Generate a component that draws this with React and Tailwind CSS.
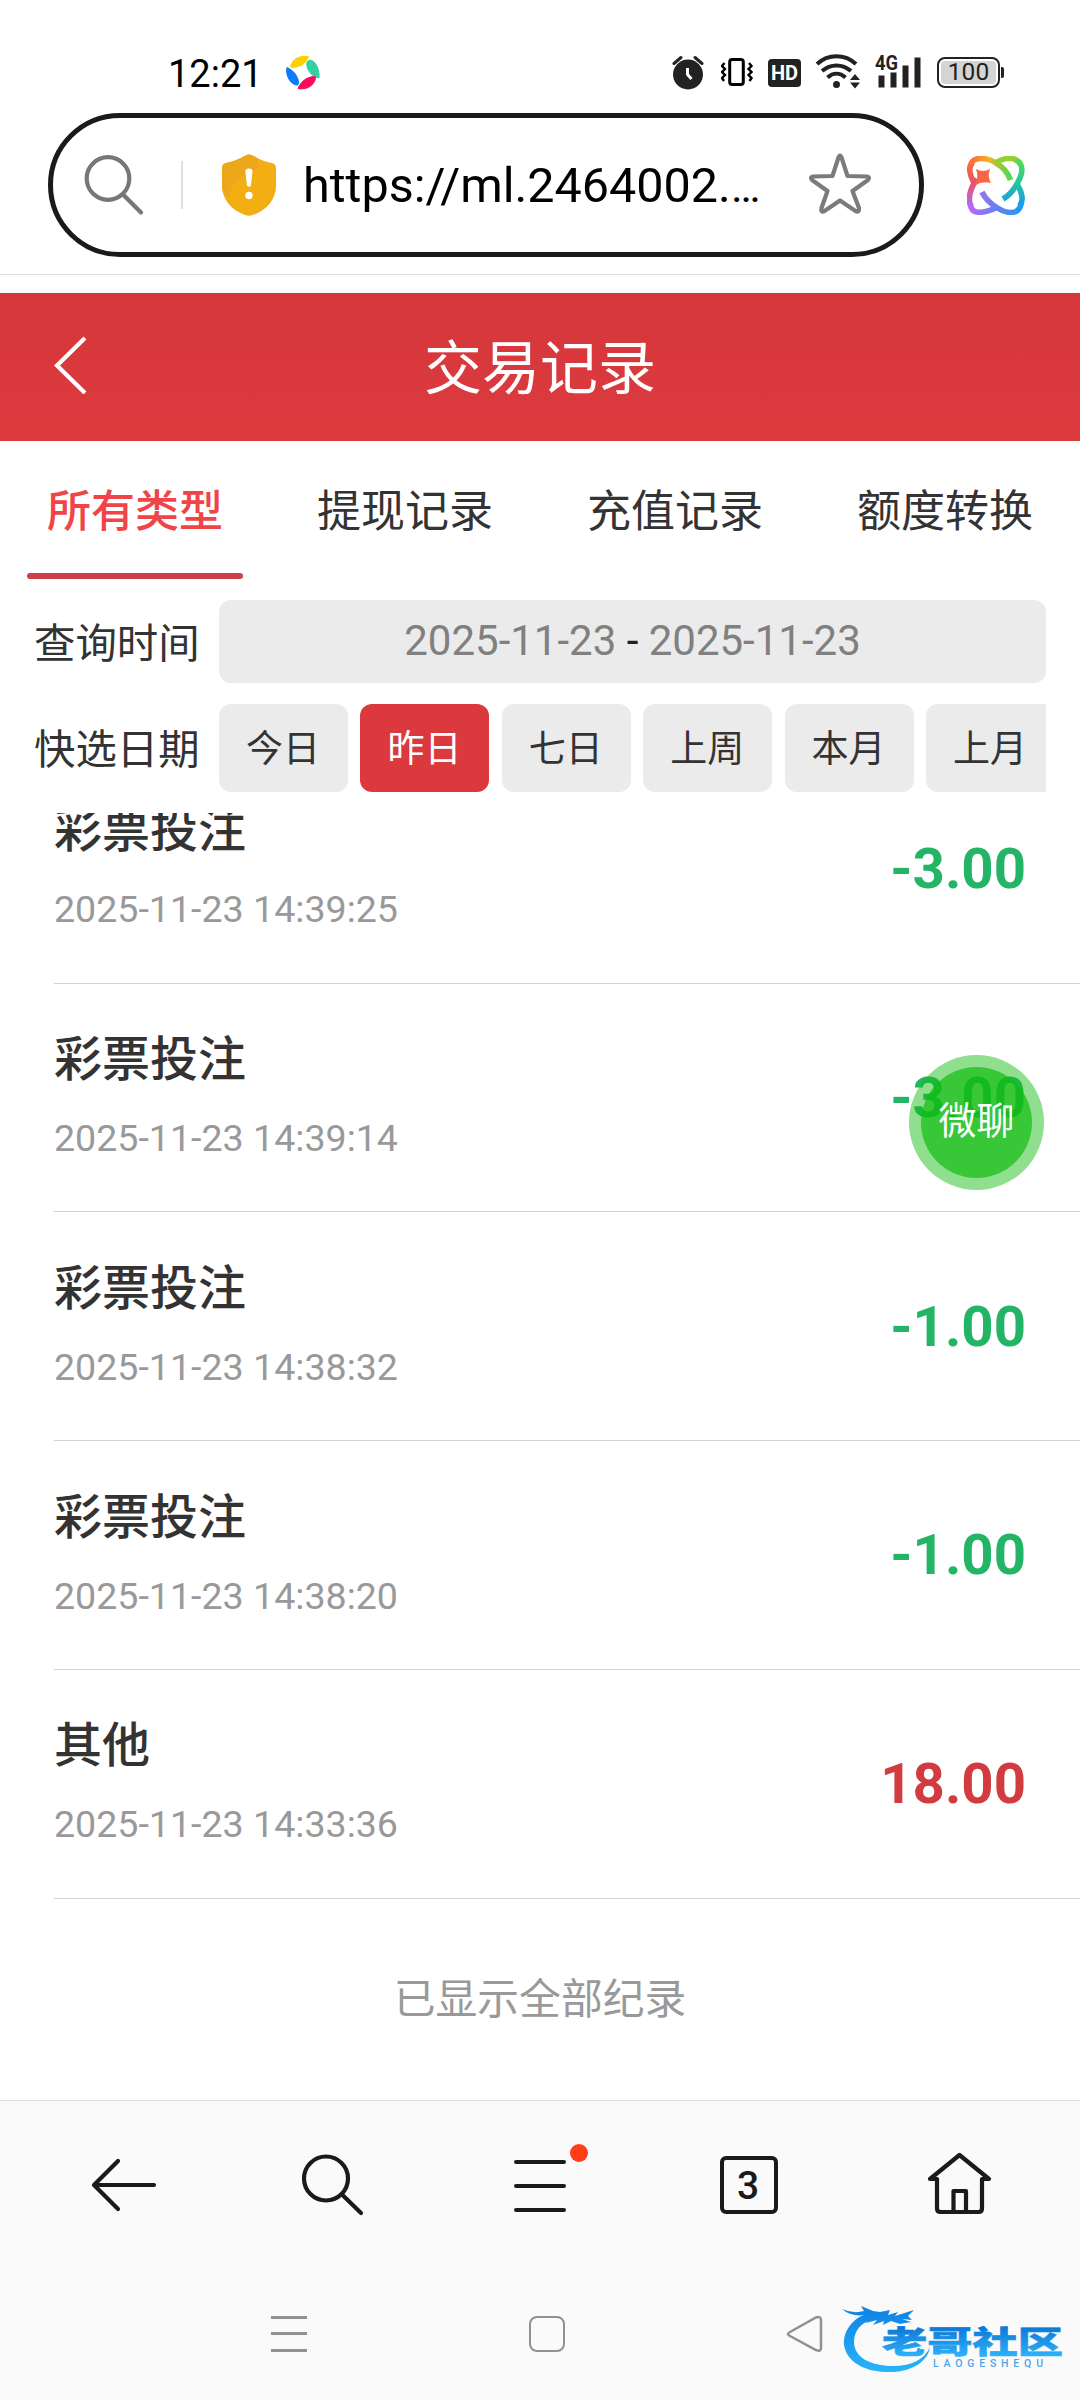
import React from "react";

const records = [
  { title: "彩票投注", time: "2025-11-23 14:39:25", amount: "-3.00" },
  { title: "彩票投注", time: "2025-11-23 14:39:14", amount: "-3.00", chat: true },
  { title: "彩票投注", time: "2025-11-23 14:38:32", amount: "-1.00" },
  { title: "彩票投注", time: "2025-11-23 14:38:20", amount: "-1.00" },
  { title: "其他", time: "2025-11-23 14:33:36", amount: "18.00" },
];

const tabs = ["所有类型", "提现记录", "充值记录", "额度转换"];
const quickDates = ["今日", "昨日", "七日", "上周", "本月", "上月"];

function StatusBar() {
  return (
    <div className="flex h-[113px] items-start pt-[54px] pl-[168px]">
      <div className="flex h-[38px] w-[118px] shrink-0 items-center pt-[1px] text-[38px] leading-none text-black">12:21</div>
      <svg className="h-[36px] w-[34px] shrink-0" viewBox="0 0 34 36" strokeWidth="1" strokeLinejoin="round">
        <path d="M4.500 12.500C6.500 5 13 1.500 22.500 2.500C21 6.500 17.500 11 13.500 12C10 13 6.500 14.500 4.500 12.500Z" fill="#fdd000" stroke="#fdd000" />
        <path d="M22.500 6.500C27.500 4.500 34 13 33 24C28 23 24 20 22 15.500C20.500 12 20 8 22.500 6.500Z" fill="#35d0a0" stroke="#35d0a0" />
        <path d="M29.500 24C28.500 31 21 36.500 12 34.500C13.500 31 16 27 20 25C24 23 29.500 21 29.500 24Z" fill="#fb0a5c" stroke="#fb0a5c" />
        <path d="M11.500 31C6 31.500 -1 23 1 13.500C5 15.500 8.500 18 10.500 22C12.500 26 13.500 30 11.500 31Z" fill="#0a7bfa" stroke="#0a7bfa" />
      </svg>
      <div className="flex-1" />
      <svg className="mr-[17px] h-[36px] w-[32px] shrink-0" viewBox="0 0 32 36" fill="none">
        <circle cx="16" cy="20.500" r="15" fill="#222" />
        <path d="M2 9.500L9 3.500M30 9.500L23 3.500" stroke="#222" strokeWidth="3" strokeLinecap="round" />
        <path d="M15.500 14V20.500L19.500 25" stroke="#fff" strokeWidth="3" />
      </svg>
      <svg className="mr-[15px] h-[36px] w-[32px] shrink-0" viewBox="0 0 32 36" fill="none" stroke="#000">
        <rect x="8.700" y="5.500" width="13.600" height="25" rx="2.500" strokeWidth="3" />
        <path d="M3.500 9L1 12L4 15L1 18L4 21L1 24L3 27M28 9L30.500 12L27.500 15L30.500 18L27.500 21L30.500 24L28.500 27" strokeWidth="2.400" />
      </svg>
      <div className="mt-[5px] mr-[14px] flex h-[28px] w-[33px] shrink-0 items-center justify-center rounded-[4px] bg-[#222] text-[20px] leading-none font-bold text-white">HD</div>
      <svg className="mr-[13px] h-[36px] w-[46px] shrink-0" viewBox="0 0 46 36" fill="none" stroke="#222">
        <path d="M2 10C13 -.5 30 -.5 41 10" strokeWidth="4" />
        <path d="M7 17C15.500 9.500 27.500 9.500 36 17" strokeWidth="4" />
        <path d="M12.500 23.500C18 18.500 25 18.500 30.500 23.500" strokeWidth="4" />
        <circle cx="21.500" cy="30.500" r="3.500" fill="#222" stroke="none" />
        <path d="M35 26L40 20L45 26ZM35 28.500L40 34.500L45 28.500Z" fill="#222" stroke="none" />
      </svg>
      <svg className="mr-[15px] h-[36px] w-[48px] shrink-0 overflow-visible" viewBox="0 0 48 36">
        <text x="1" y="16" fontFamily="Roboto, sans-serif" fontSize="20" fontWeight="700" textLength="23" lengthAdjust="spacingAndGlyphs" fill="#222">4G</text>
        <path d="M4.500 21.500h6v12h-6zM16.500 18.500h6v15h-6zM28.500 11.500h6v22h-6zM40.500 3.500h6v30h-6z" fill="#222" />
      </svg>
      <div className="mt-[3px] flex h-[31px] w-[63px] shrink-0 items-center rounded-[8px] border-2 border-[#222] p-[2px]">
        <div className="flex h-full w-full items-center justify-center rounded-[4px] bg-[#d4d4d4] text-[24.500px] leading-none text-[#222]">100</div>
      </div>
      <div className="mt-[13px] mr-[76px] ml-px h-[11px] w-[3px] shrink-0 rounded-r-[2px] bg-[#222]" />
    </div>
  );
}

function AddressBar() {
  return (
    <div className="flex h-[144px] items-center pl-[48px]">
      <div className="flex h-[144px] w-[876px] items-center rounded-full border-5 border-[#1a1a1a]">
        <svg className="ml-[31px] h-[62px] w-[62px] shrink-0" viewBox="84 154 62 62" fill="none" stroke="#777" strokeWidth="4.200" strokeLinecap="round">
          <circle cx="108" cy="178.500" r="21.300" />
          <path d="M123.500 195L141 212.500" />
        </svg>
        <div className="ml-[35px] h-[48px] w-[2px] bg-[#e0e0e0]" />
        <svg className="ml-[39px] h-[62px] w-[54px] shrink-0" viewBox="0 0 54 62">
          <path d="M24 1.200Q27 0 30 1.200C36 4.500 43 8 50 9Q54 10 54 14V32C54 45 45 56 31 61Q27 62.500 23 61C9 56 0 45 0 32V14Q0 10 4 9C11 8 18 4.500 24 1.200Z" fill="#f3ae13" />
          <path d="M30 1.200Q27 0 24 1.200C18 4.500 11 8 4 9Q0 10 0 14V32C0 36 2 41 7 44C7 32 16 24 27 20C36 17 38 10 34 3Z" fill="#eda71a" />
          <path d="M23.300 17Q23.500 14.500 27 14.500Q30.700 14.500 30.500 17L29 31.500Q27 34 25 31.500Z" fill="#fff" />
          <circle cx="27" cy="41.500" r="3.700" fill="#fff" />
        </svg>
        <div className="ml-[27px] w-[505px] shrink-0 pt-[3px] text-[48.500px] leading-[60px] whitespace-nowrap text-black">
          https://ml.2464002.<span className="tracking-[-3px] [font-size:44px]">…</span>
        </div>
        <svg className="-mt-[3px] h-[62px] w-[64px] shrink-0" viewBox="0 0 64 62" fill="none" stroke="#7b7b7b" strokeWidth="4.200" strokeLinejoin="round">
          <path d="M30.300 5Q32 0 33.700 5L39.500 23L59 23.500Q62.500 24.500 60 27L44.500 38L51 55Q51.500 60 47.500 58L32 47.500L16.500 58Q12.500 60 13.500 55L19.500 38L4 27Q1.500 24.500 5 23.500L24.500 23Z" />
        </svg>
      </div>
      <svg className="ml-[43px] h-[59px] w-[58px]" viewBox="0 0 58 59" fill="none" strokeWidth="5.600" strokeLinecap="butt">
        <defs>
          <linearGradient id="orbitTop" x1="0" y1="0" x2="1" y2="0">
            <stop offset="0" stopColor="#fb6a3c" />
            <stop offset=".45" stopColor="#f2b421" />
            <stop offset="1" stopColor="#4fd955" />
          </linearGradient>
          <linearGradient id="orbitLeft" x1="0" y1="0" x2="0" y2="1">
            <stop offset="0" stopColor="#fa7038" />
            <stop offset=".45" stopColor="#ee5168" />
            <stop offset="1" stopColor="#b16bf2" />
          </linearGradient>
          <linearGradient id="orbitRight" x1="0" y1="0" x2="0" y2="1">
            <stop offset="0" stopColor="#55dc50" />
            <stop offset=".5" stopColor="#20c79d" />
            <stop offset="1" stopColor="#1f93f5" />
          </linearGradient>
          <linearGradient id="orbitBottom" x1="0" y1="0" x2="1" y2="0">
            <stop offset="0" stopColor="#b36bf5" />
            <stop offset=".5" stopColor="#6b7ff0" />
            <stop offset="1" stopColor="#1c9bf2" />
          </linearGradient>
        </defs>
        <path d="M4 10C4 0 20 1 29 7C36 11 41 17 43.500 24" stroke="url(#orbitTop)" />
        <path d="M28 7C35 3 44 .5 50 4.500" stroke="#94cf35" />
        <path d="M8 29C2 18 1 10 6 6M10 23C2 34 1 42 3.500 50" stroke="url(#orbitLeft)" />
        <path d="M49 4C57 8 56 17 51 26C47 34 43 39 36 43M49 27C55 35 57 44 53 50" stroke="url(#orbitRight)" />
        <path d="M15 36C20 47 38 60 49 55.500Q54 53 54 46M3.500 47C3 59 15 58 29 52" stroke="url(#orbitBottom)" />
        <path d="M9 13Q16 17 23 13Q20 20 24 27Q16 25 8 29Q12 21 9 13Z" fill="#f96543" />
      </svg>
    </div>
  );
}

function PageHeader() {
  return (
    <header className="flex h-[148px] items-center bg-linear-to-b from-[#d5373b] to-[#dd3a3e] text-white">
      <svg className="-mt-[4px] ml-[54px] h-[58px] w-[34px]" viewBox="0 0 34 58" fill="none" stroke="#fff" strokeWidth="4.200">
        <path d="M31 2L3 29.500L31 57" />
      </svg>
      <h1 className="flex-1 pt-[3px] pr-[88px] text-center text-[58px] leading-none">交易记录</h1>
    </header>
  );
}

function Tabs() {
  return (
    <nav className="grid h-[138px] grid-cols-4">
      {tabs.map((tab, i) => (
        <div key={tab} className={i === 0 ? "flex flex-col items-center text-[#f04448]" : "flex flex-col items-center text-[#333]"}>
          <div className={i === 0 ? "flex h-[132px] items-center pt-[9px] text-[44px] font-medium" : "flex h-[132px] items-center pt-[9px] text-[44px]"}>{tab}</div>
          {i === 0 && <div className="h-[6px] w-[216px] rounded-full bg-[#cc4048]" />}
        </div>
      ))}
    </nav>
  );
}

function Filters() {
  return (
    <section className="mt-[21px] pr-[34px] pl-[34px] text-[#333]">
      <div className="flex h-[83px] items-center">
        <div className="w-[185px] shrink-0 pt-[5px] text-[41.400px]">查询时间</div>
        <div className="flex h-full flex-1 items-center justify-center rounded-[12px] bg-[#ebebeb] pb-[2px] text-[42px] text-[#808080]">
          2025-11-23<span className="px-[10.400px] text-[#222]">-</span>2025-11-23
        </div>
      </div>
      <div className="mt-[21px] flex h-[88px] items-center">
        <div className="w-[185px] shrink-0 pt-[5px] text-[41.400px]">快选日期</div>
        <div className="flex h-full flex-1 gap-[12.400px] overflow-hidden">
          {quickDates.map((label) => (
            <div
              key={label}
              className={
                label === "昨日"
                  ? "flex h-full w-[129px] shrink-0 items-center justify-center rounded-[12px] bg-[#dc393e] pt-[4px] pr-[1px] text-[37px] text-white"
                  : "flex h-full w-[129px] shrink-0 items-center justify-center rounded-[12px] bg-[#ebebeb] pt-[4px] pr-[1px] text-[37px]"
              }
            >
              {label}
            </div>
          ))}
        </div>
      </div>
    </section>
  );
}

function ChatButton() {
  return (
    <div className="absolute top-[71px] right-[36px] flex h-[135px] w-[135px] items-center justify-center rounded-full bg-[#11bc11]/47">
      <div className="flex h-[111px] w-[111px] items-center justify-center rounded-full bg-[#11bc11]/70 pb-[2px] text-[38px] leading-none text-white">微聊</div>
    </div>
  );
}

function RecordRow({ record }) {
  const negative = record.amount.startsWith("-");
  return (
    <li className="relative h-[228.700px] shrink-0 pl-[54px]">
      <div className="flex h-full items-center justify-between border-b border-[#d2d2d2] pr-[54px]">
        <div className="pb-[5px]">
          <div className="text-[48px] leading-[72px] font-medium text-[#333]">{record.title}</div>
          <div className="mt-[14px] text-[37.600px] leading-[56px] text-[#999]">{record.time}</div>
        </div>
        <div className={negative ? "pt-[1px] text-[56.400px] leading-none font-bold text-[#23b565]" : "pt-[1px] text-[56.400px] leading-none font-bold text-[#d23b3f]"}>{record.amount}</div>
      </div>
      {record.chat && <ChatButton />}
    </li>
  );
}

function BrowserToolbar() {
  return (
    <div className="flex h-[170px] items-center border-t border-[#dcdedd] text-[#1a1a1a]">
      <svg className="-mt-[2px] ml-[90px] h-[70px] w-[68px]" viewBox="90 2150 68 70" fill="none" stroke="currentColor" strokeWidth="4.200" strokeLinecap="round" strokeLinejoin="round">
        <path d="M118 2161L94 2185L118 2209M94 2185H154" />
      </svg>
      <svg className="-mt-[2px] ml-[140px] h-[70px] w-[70px]" viewBox="298 2150 70 70" fill="none" stroke="currentColor" strokeWidth="4.200" strokeLinecap="round">
        <circle cx="326" cy="2178.500" r="22" />
        <path d="M342.500 2195L361 2213" />
      </svg>
      <div className="relative ml-[146px] flex h-[52px] w-[52px] flex-col justify-between">
        <div className="h-[4px] rounded-full bg-current" />
        <div className="h-[4px] rounded-full bg-current" />
        <div className="h-[4px] rounded-full bg-current" />
        <div className="absolute -top-[16px] -right-[22px] h-[18px] w-[18px] rounded-full bg-[#ff3d17]" />
      </div>
      <div className="-mt-[2px] ml-[154px] flex h-[58px] w-[58px] items-center justify-center rounded-[6px] border-4 border-current pt-[3px] pr-[2px] text-[39px] leading-none font-medium">3</div>
      <svg className="-mt-[2px] ml-[148px] h-[70px] w-[68px]" viewBox="926 2150 68 70" fill="none" stroke="currentColor" strokeWidth="4.200" strokeLinejoin="round">
        <path d="M937 2179H930L959.500 2155L989 2179H982V2208.500Q982 2212 978.500 2212H940.500Q937 2212 937 2208.500ZM953.500 2212V2191H966V2212" />
      </svg>
    </div>
  );
}

function Watermark() {
  return (
    <svg className="absolute right-[14px] bottom-[24px] h-[76px] w-[228px]" viewBox="838 2300 228 76">
      <defs>
        <linearGradient id="waterBlue" gradientUnits="userSpaceOnUse" x1="0" y1="2304" x2="0" y2="2372">
          <stop offset="0" stopColor="#0d80e2" />
          <stop offset="1" stopColor="#29b4fb" />
        </linearGradient>
        <linearGradient id="waterText" gradientUnits="userSpaceOnUse" x1="0" y1="2326" x2="0" y2="2358">
          <stop offset="0" stopColor="#0b76d6" />
          <stop offset="1" stopColor="#2fb5fb" />
        </linearGradient>
      </defs>
      <path d="M870 2313C852 2317 843 2332 844 2345C847 2364 868 2373 893 2372C913 2371 928 2361 930 2347C925 2359 912 2366 893 2366C870 2366 854 2357 854 2342C854 2330 862 2321 876 2319Z" fill="url(#waterBlue)" />
      <path d="M842 2309Q853 2314 864 2311L861 2306L873 2311L880 2312L890 2310L888 2315L898 2312L895 2316L914 2310L908 2316L912 2320L902 2319L911 2322L900 2324L891 2321L883 2325L884 2321L873 2325L877 2320L866 2323L870 2318L858 2322L865 2315Q851 2317 842 2309Z" fill="url(#waterBlue)" />
      <text x="882" y="2353" textLength="181" lengthAdjust="spacingAndGlyphs" fontFamily="'Noto Sans CJK SC', sans-serif" fontSize="31" fontWeight="900" fill="url(#waterText)" stroke="url(#waterText)" strokeWidth=".6">老哥社区</text>
      <text x="933" y="2367" textLength="110" fontFamily="Roboto, sans-serif" fontSize="10.500" fontWeight="500" fill="#52a5e5">LAOGESHEQU</text>
    </svg>
  );
}

function SystemNav() {
  return (
    <div className="relative flex h-[130px] items-center pb-[3px]">
      <div className="ml-[271px] flex h-[36px] w-[36px] flex-col justify-between">
        <div className="h-[3px] bg-[#919191]" />
        <div className="h-[3px] bg-[#919191]" />
        <div className="h-[3px] bg-[#919191]" />
      </div>
      <div className="ml-[222px] h-[36px] w-[36px] rounded-[8px] border-[2.500px] border-[#919191]" />
      <svg className="ml-[221px] h-[38px] w-[38px]" viewBox="0 0 38 38" fill="none" stroke="#919191" strokeWidth="2.500">
        <path d="M4 17L30 2.500Q35 1 35 5V33Q35 37 30 35L4 21Q0 19 4 17Z" />
      </svg>
      <Watermark />
    </div>
  );
}

export default function App() {
  return (
    <div className="flex h-[2400px] w-[1080px] flex-col overflow-hidden bg-white font-[Roboto,'Noto_Sans_CJK_SC',sans-serif]">
      <StatusBar />
      <AddressBar />
      <div className="h-[18px] shrink-0 border-b border-[#dcdedd]" />
      <div className="h-[18px] shrink-0" />
      <PageHeader />
      <Tabs />
      <Filters />
      <main className="mt-[21px] flex min-h-0 flex-1 flex-col overflow-hidden">
        <ul className="-mt-[57.900px] flex flex-col">
          {records.map((record) => (
            <RecordRow key={record.time} record={record} />
          ))}
        </ul>
        <div className="flex h-[202px] items-center justify-center pt-[2px] text-[41.800px] text-[#999]">已显示全部纪录</div>
      </main>
      <footer className="shrink-0 bg-[#fafafa]">
        <BrowserToolbar />
        <SystemNav />
      </footer>
    </div>
  );
}
